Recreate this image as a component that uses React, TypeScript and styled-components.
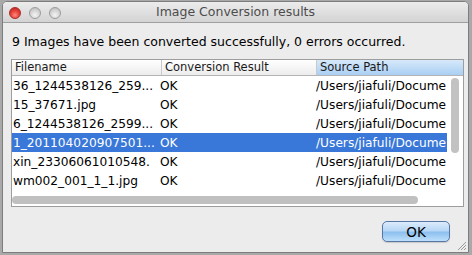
import styled, { createGlobalStyle } from "styled-components";

const GlobalStyle = createGlobalStyle`
  html, body {
    margin: 0;
    padding: 0;
    background: #a9a9a9;
    font-family: "DejaVu Sans", "Liberation Sans", sans-serif;
  }
`;

const Window = styled.div`
  position: relative;
  box-sizing: border-box;
  width: 467px;
  height: 252px;
  margin: 1px 0 0 2px;
  background: #ececec;
  border: 1px solid #7d7d7d;
  border-radius: 5px 5px 0 0;
  display: flex;
  flex-direction: column;
  overflow: hidden;
`;

const TitleBar = styled.div`
  height: 20px;
  display: grid;
  grid-template-columns: 1fr auto 1fr;
  align-items: center;
  background: linear-gradient(#ececec, #d3d3d3);
  border-bottom: 1px solid #9f9f9f;
`;

const Lights = styled.div`
  display: flex;
  gap: 8px;
  padding-left: 6px;
  margin-top: 1px;
`;

interface LightProps {
  red?: boolean;
}

const Light = styled.span<LightProps>`
  width: 12px;
  height: 12px;
  box-sizing: border-box;
  border-radius: 50%;
  border: 1px solid ${({ red }) => (red ? "#a82b28" : "#9c9c9c")};
  background: ${({ red }) =>
    red
      ? "radial-gradient(circle at 50% 70%, #ff8a80 0%, #e7463c 45%, #b9201b 100%)"
      : "radial-gradient(circle at 50% 70%, #f4f4f4 0%, #d6d6d6 50%, #b4b4b4 100%)"};
`;

const Title = styled.div`
  font-size: 12.5px;
  color: #4c4c4c;
  line-height: 20px;
`;

const Message = styled.div`
  height: 25px;
  padding: 11px 0 0 9px;
  font-size: 12.5px;
  line-height: 16px;
  color: #000;
`;

const Table = styled.div`
  box-sizing: border-box;
  width: 453px;
  margin-left: 8px;
  border: 1px solid #9d9d9d;
  background: #fff;
  display: flex;
  flex-direction: column;
`;

const Header = styled.div`
  display: flex;
  height: 15px;
  border-bottom: 1px solid #b4b4b4;
  background: linear-gradient(#ffffff, #ececec);
`;

interface HeadCellProps {
  width: number;
  active?: boolean;
}

const HeadCell = styled.div<HeadCellProps>`
  box-sizing: border-box;
  width: ${({ width }) => width}px;
  flex: none;
  padding-left: 3px;
  font-size: 11.5px;
  line-height: 15px;
  color: #1a1a1a;
  border-left: 1px solid #c9c9c9;
  white-space: nowrap;
  overflow: hidden;
  background: ${({ active }) =>
    active ? "linear-gradient(#d7e9fb, #a9cff3)" : "transparent"};

  &:first-child {
    border-left: none;
  }
`;

const Body = styled.div`
  display: flex;
  height: 119px;
`;

const Rows = styled.div`
  width: 435px;
  overflow: hidden;
`;

interface RowProps {
  selected?: boolean;
}

const Row = styled.div<RowProps>`
  display: flex;
  height: 19px;
  align-items: center;
  font-size: 12.2px;
  color: ${({ selected }) => (selected ? "#fff" : "#000")};
  background: ${({ selected }) => (selected ? "#3977d8" : "transparent")};
`;

interface CellProps {
  width: number;
}

const Cell = styled.div<CellProps>`
  box-sizing: border-box;
  width: ${({ width }) => width}px;
  flex: none;
  padding-left: 1px;
  white-space: nowrap;
  overflow: hidden;
`;

const VScroll = styled.div`
  flex: 1;
  display: flex;
  justify-content: center;
  padding-top: 2px;
`;

const VThumb = styled.div`
  width: 8px;
  height: 75px;
  border-radius: 4px;
  background: #c2c2c2;
`;

const HScroll = styled.div`
  height: 11px;
  padding: 1px 0 0 0;
  box-sizing: border-box;
`;

const HThumb = styled.div`
  width: 406px;
  height: 8px;
  border-radius: 4px;
  background: #c0c0c0;
`;

const Footer = styled.div`
  display: flex;
  justify-content: flex-end;
  padding: 14px 18px 0 0;
`;

const OkButton = styled.button`
  width: 68px;
  height: 21px;
  padding: 0;
  border: 1px solid #5676a6;
  border-radius: 5px;
  font-family: "DejaVu Sans", "Liberation Sans", sans-serif;
  font-size: 13.5px;
  color: #000;
  background: linear-gradient(
    #dcebfb 0%,
    #b7d7f6 45%,
    #8ec0ef 55%,
    #bde0fb 100%
  );
  box-shadow: 0 1px 1px rgba(0, 0, 0, 0.15);
`;

const Grip = styled.svg`
  position: absolute;
  right: 1px;
  bottom: 1px;
`;

const columns = [147, 156, 132];

const rows = [
  { name: "36_1244538126_259...", path: "/Users/jiafuli/Docume" },
  { name: "15_37671.jpg", path: "/Users/jiafuli/Docume" },
  { name: "6_1244538126_2599...", path: "/Users/jiafuli/Docume" },
  { name: "1_201104020907501...", path: "/Users/jiafuli/Docume", selected: true },
  { name: "xin_23306061010548.", path: "/Users/jiafuli/Docume" },
  { name: "wm002_001_1_1.jpg", path: "/Users/jiafuli/Docume" },
];

const App = () => {
  return (
    <>
      <GlobalStyle />
      <Window>
        <TitleBar>
          <Lights>
            <Light red />
            <Light />
            <Light />
          </Lights>
          <Title>Image Conversion results</Title>
          <div />
        </TitleBar>

        <Message>
          9 Images have been converted successfully, 0 errors occurred.
        </Message>

        <Table>
          <Header>
            <HeadCell width={149}>Filename</HeadCell>
            <HeadCell width={155}>Conversion Result</HeadCell>
            <HeadCell width={147} active>
              Source Path
            </HeadCell>
          </Header>
          <Body>
            <Rows>
              {rows.map((row) => (
                <Row key={row.name} selected={row.selected}>
                  <Cell width={columns[0]}>{row.name}</Cell>
                  <Cell width={columns[1]}>OK</Cell>
                  <Cell width={columns[2]}>{row.path}</Cell>
                </Row>
              ))}
            </Rows>
            <VScroll>
              <VThumb />
            </VScroll>
          </Body>
          <HScroll>
            <HThumb />
          </HScroll>
        </Table>

        <Footer>
          <OkButton>OK</OkButton>
        </Footer>

        <Grip width="11" height="11" viewBox="0 0 11 11">
          <path d="M10 2 L2 10 M10 5 L5 10 M10 8 L8 10" stroke="#9a9a9a" strokeWidth="1" />
        </Grip>
      </Window>
    </>
  );
};

export default App;
